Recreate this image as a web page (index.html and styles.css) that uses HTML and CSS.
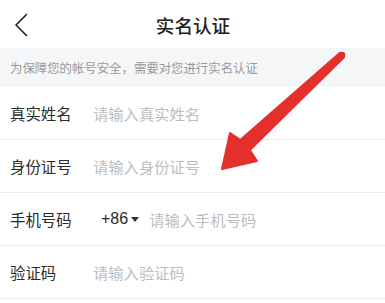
FILE: index.html
```html
<!DOCTYPE html>
<html lang="zh-CN">
<head>
<meta charset="utf-8">
<title>实名认证</title>
<link rel="stylesheet" href="styles.css">
</head>
<body>
<div class="page">
  <header class="header">
    <span class="back">
      <svg width="14" height="24" viewBox="0 0 14 24"><path d="M12.5 1.5 L2 12 L12.5 22.5" fill="none" stroke="#222" stroke-width="1.6" stroke-linecap="round" stroke-linejoin="round"/></svg>
    </span>
    <h1 class="title">实名认证</h1>
  </header>
  <div class="notice">为保障您的帐号安全，需要对您进行实名认证</div>
  <div class="form">
    <div class="row"><span class="label">真实姓名</span><span class="ph">请输入真实姓名</span></div>
    <div class="row"><span class="label">身份证号</span><span class="ph">请输入身份证号</span></div>
    <div class="row"><span class="label">手机号码</span><span class="code">+86</span><span class="caret"></span><span class="ph ph-phone">请输入手机号码</span></div>
    <div class="row"><span class="label">验证码</span><span class="ph">请输入验证码</span></div>
  </div>
  <svg class="arrow" width="385" height="303" viewBox="0 0 385 303">
    <path d="M340 52.8 L240.2 139.9 L230 133 L222 169 L257 161 L249.8 150.1 L344 57.2 Z" fill="#e52f2c" stroke="#e52f2c" stroke-width="2" stroke-linejoin="round"/>
    <circle cx="342" cy="55" r="3.2" fill="#e52f2c"/>
  </svg>
</div>
</body>
</html>
```

FILE: styles.css
```css
html, body {
  margin: 0;
  padding: 0;
  background: #ffffff;
}
body {
  font-family: "Noto Sans CJK SC", "Noto Sans", sans-serif;
  width: 385px;
  height: 303px;
  overflow: hidden;
}
.page {
  position: relative;
  width: 385px;
  height: 303px;
}
.header {
  height: 48px;
  display: flex;
  align-items: center;
  justify-content: center;
  position: relative;
}
.back {
  position: absolute;
  left: 14px;
  top: 13px;
  display: block;
  line-height: 0;
}
.title {
  margin: 0;
  font-size: 18.6px;
  font-weight: 500;
  color: #222;
  line-height: 1;
  padding-left: 1px;
  padding-top: 2px;
}
.notice {
  height: 39px;
  background: #f5f6f8;
  display: flex;
  align-items: center;
  padding-left: 10px;
  font-size: 12.4px;
  color: #9a9a9a;
}
.row {
  height: 52px;
  border-bottom: 1px solid #ececec;
  display: flex;
  align-items: center;
  padding-left: 10px;
}
.label {
  width: 83px;
  font-size: 15.4px;
  color: #2b2b2b;
  flex-shrink: 0;
}
.ph {
  font-size: 15.3px;
  color: #bdbdbd;
}
.code {
  margin-left: 8px;
  font-family: "Liberation Sans", Arial, sans-serif;
  font-size: 16px;
  color: #2b2b2b;
}
.caret {
  margin-left: 3px;
  width: 0;
  height: 0;
  border-left: 4px solid transparent;
  border-right: 4px solid transparent;
  border-top: 5px solid #333;
}
.ph-phone {
  margin-left: 10px;
}
.arrow {
  position: absolute;
  left: 0;
  top: 0;
  pointer-events: none;
}
```
